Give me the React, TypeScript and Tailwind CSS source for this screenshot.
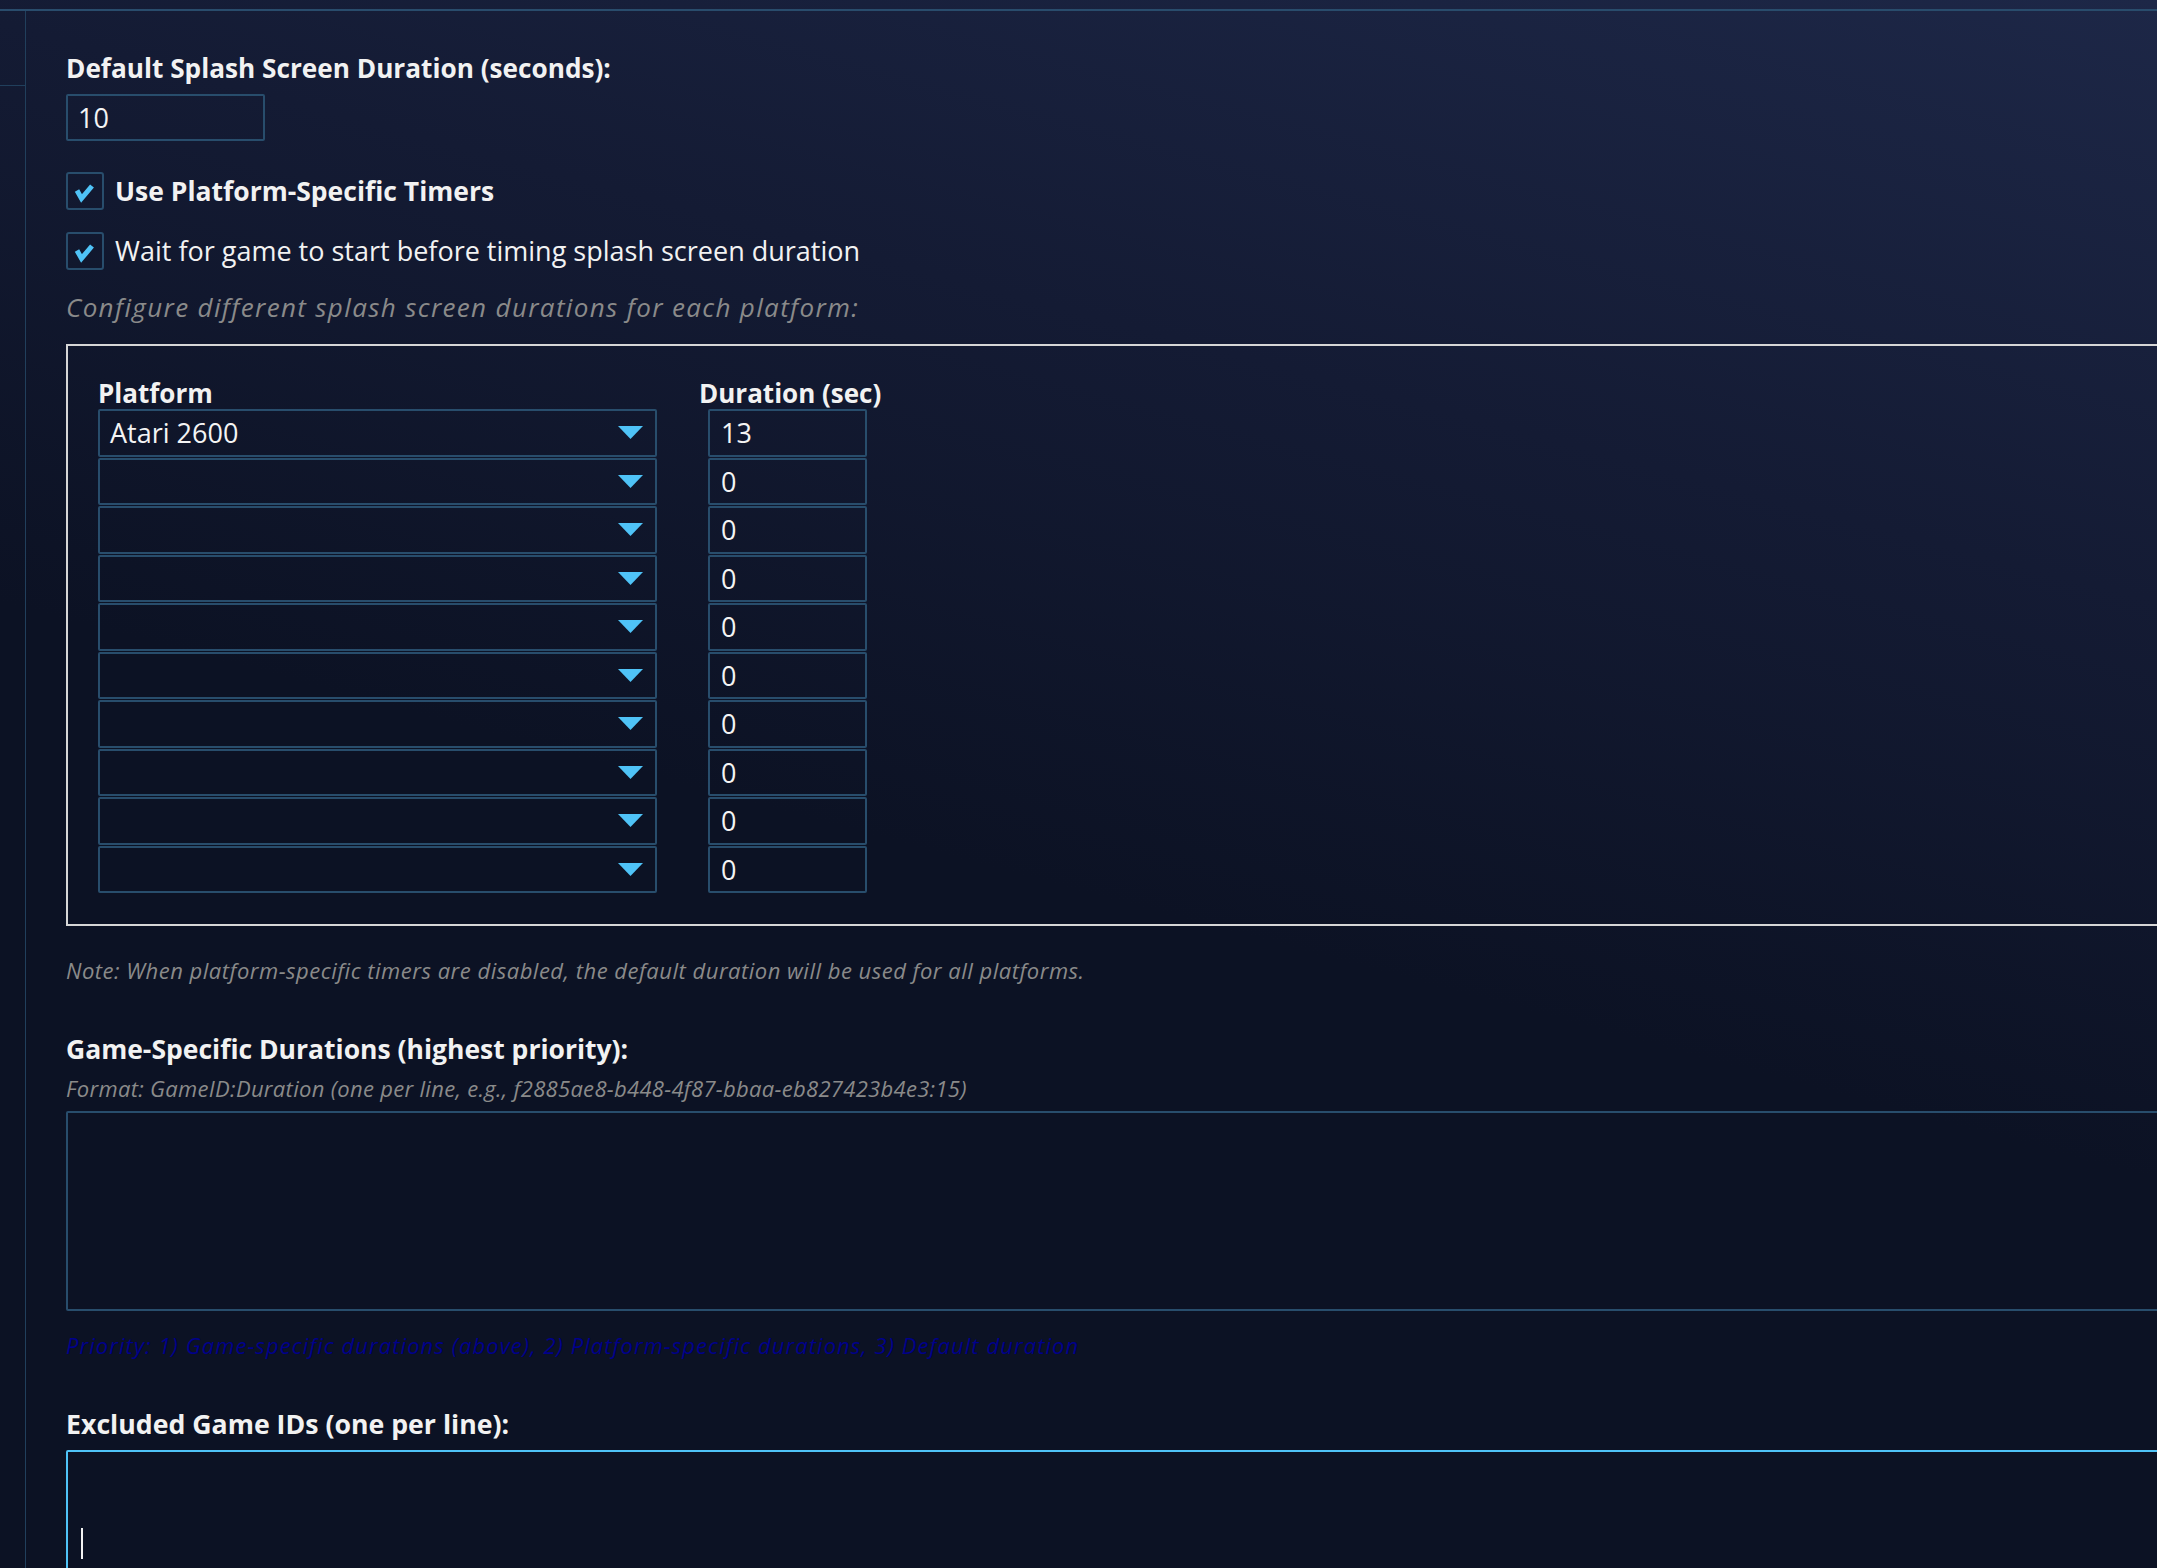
import React from "react";

const platformRows = [
  { platform: "Atari 2600", duration: "13" },
  { platform: "", duration: "0" },
  { platform: "", duration: "0" },
  { platform: "", duration: "0" },
  { platform: "", duration: "0" },
  { platform: "", duration: "0" },
  { platform: "", duration: "0" },
  { platform: "", duration: "0" },
  { platform: "", duration: "0" },
  { platform: "", duration: "0" },
];

function CheckBox() {
  return (
    <span className="flex h-[38px] w-[38px] shrink-0 rounded-[3px] border-2 border-[#284d6c]">
      <svg viewBox="0 0 34 34" className="h-[34px] w-[34px]">
        <polyline
          points="9,16.5 13.5,24.5 24,12"
          fill="none"
          stroke="#4fc3f7"
          strokeWidth="5"
          strokeLinejoin="miter"
        />
      </svg>
    </span>
  );
}

function PlatformSelect({ value }: { value: string }) {
  return (
    <div className="flex h-[47.5px] w-[559px] items-center justify-between rounded-[2px] border-2 border-[#284d6c] pl-[10px] pr-[12px] text-[27px] text-[#f4f4f4]">
      <span>{value}</span>
      <svg viewBox="0 0 25 13" className="h-[13px] w-[25px]">
        <polygon points="0,0 25,0 12.5,13" fill="#4fc3f7" />
      </svg>
    </div>
  );
}

export default function App() {
  return (
    <div className="h-screen w-full overflow-hidden bg-[linear-gradient(195deg,#1d2747_0%,#141b34_28%,#0c1224_55%,#0c1224_100%)] pt-[9px] font-['Open_Sans',sans-serif] text-[#f2f2f2]">
      <div className="flex border-t-2 border-[#294c6c]">
        <aside className="w-[26px] shrink-0 border-r-[1.5px] border-[#213f5c]">
          <div className="h-[75px] border-b-[1.5px] border-[#213f5c]" />
        </aside>

        <main className="flex flex-col items-start pl-[40px] pt-[41px]">
          <label className="text-[26.2px] font-bold leading-[32px]">
            Default Splash Screen Duration (seconds):
          </label>
          <input
            readOnly
            value="10"
            className="mt-[10px] h-[47px] w-[199px] shrink-0 rounded-[2px] border-2 border-[#284d6c] bg-transparent pl-[10px] text-[27px] text-[#f4f4f4] outline-none"
          />

          <div className="mt-[31px] flex items-center gap-[11px]">
            <CheckBox />
            <span className="text-[26.5px] font-bold leading-[32px]">Use Platform-Specific Timers</span>
          </div>
          <div className="mt-[22px] flex items-center gap-[11px]">
            <CheckBox />
            <span className="text-[27px] leading-[32px]">
              Wait for game to start before timing splash screen duration
            </span>
          </div>

          <p className="mt-[20.5px] text-[26px] italic leading-[32px] tracking-[1.35px] text-[#8a8a8a]">
            Configure different splash screen durations for each platform:
          </p>

          <section className="mt-[21.5px] w-[2140px] shrink-0 border-2 border-[#d6d6d6] pb-[31px] pl-[30px] pt-[31px]">
            <div className="flex gap-[42px]">
              <div className="flex flex-col">
                <div className="text-[26px] font-bold leading-[32px]">Platform</div>
                <div className="flex flex-col gap-px">
                  {platformRows.map((row, i) => (
                    <PlatformSelect key={i} value={row.platform} />
                  ))}
                </div>
              </div>
              <div className="flex flex-col">
                <div className="text-[26px] font-bold leading-[32px]">Duration (sec)</div>
                <div className="flex flex-col gap-px pl-[9px]">
                  {platformRows.map((row, i) => (
                    <input
                      key={i}
                      readOnly
                      value={row.duration}
                      className="h-[47.5px] w-[159px] shrink-0 rounded-[2px] border-2 border-[#284d6c] bg-transparent pl-[11px] text-[27px] text-[#f4f4f4] outline-none"
                    />
                  ))}
                </div>
              </div>
            </div>
          </section>

          <p className="mt-[30px] text-[22px] italic leading-[28px] tracking-[0.5px] text-[#8a8a8a]">
            Note: When platform-specific timers are disabled, the default duration will be used for all platforms.
          </p>

          <label className="mt-[48.5px] text-[26.5px] font-bold leading-[32px]">
            Game-Specific Durations (highest priority):
          </label>
          <p className="mt-[9px] text-[22px] italic leading-[28px] tracking-[0.3px] text-[#8a8a8a]">
            Format: GameID:Duration (one per line, e.g., f2885ae8-b448-4f87-bbaa-eb827423b4e3:15)
          </p>
          <textarea
            readOnly
            value=""
            className="mt-[9px] h-[200px] w-[2140px] shrink-0 resize-none rounded-[2px] border-2 border-[#284d6c] bg-transparent outline-none"
          />
          <p className="mt-[20px] text-[22px] italic leading-[28px] tracking-[1.05px] text-[#00008b]">
            Priority: 1) Game-specific durations (above), 2) Platform-specific durations, 3) Default duration
          </p>

          <label className="mt-[49.5px] text-[26.7px] font-bold leading-[32px]">
            Excluded Game IDs (one per line):
          </label>
          <div className="relative mt-[10px] h-[300px] w-[2140px] shrink-0 rounded-[2px] border-2 border-[#4fc3f7]">
            <textarea readOnly value="" className="h-full w-full resize-none bg-transparent outline-none" />
            <span className="absolute left-[13px] top-[76px] h-[31px] w-[1.5px] bg-[#f2f2f2]" />
          </div>
        </main>
      </div>
    </div>
  );
}
